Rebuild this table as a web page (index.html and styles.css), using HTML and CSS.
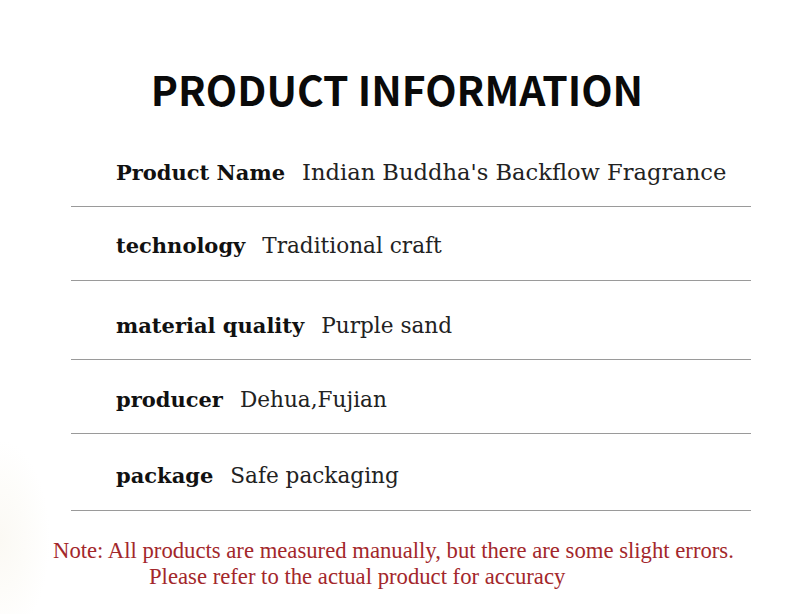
FILE: index.html
```html
<!DOCTYPE html>
<html>
<head>
<meta charset="utf-8">
<link rel="stylesheet" href="styles.css">
</head>
<body>
<div class="page">
  <h1 class="title">PRODUCT INFORMATION</h1>
  <div class="table">
    <div class="row row-1"><span class="label">Product Name</span><span class="value value-lg">Indian Buddha's Backflow Fragrance</span></div>
    <div class="row row-2"><span class="label">technology</span><span class="value">Traditional craft</span></div>
    <div class="row row-3"><span class="label">material quality</span><span class="value">Purple sand</span></div>
    <div class="row row-4"><span class="label">producer</span><span class="value">Dehua,Fujian</span></div>
    <div class="row row-5"><span class="label">package</span><span class="value">Safe packaging</span></div>
  </div>
  <div class="note">
    <p class="note-line">Note: All products are measured manually, but there are some slight errors.</p>
    <p class="note-line note-second">Please refer to the actual product for accuracy</p>
  </div>
</div>
</body>
</html>
```
FILE: styles.css
```css
html, body {
  margin: 0;
  padding: 0;
  background: #ffffff;
}
.page {
  width: 790px;
  height: 614px;
  overflow: hidden;
  background: radial-gradient(ellipse 50px 100px at 0px 540px, #fbf9f4 0%, #fdfcf9 50%, rgba(255,255,255,0) 100%), #ffffff;
}
.title {
  margin: 0;
  padding-top: 59px;
  height: 60px;
  line-height: 60px;
  text-align: center;
  font-family: "Noto Sans CJK SC", "Noto Sans", sans-serif;
  font-weight: 700;
  font-size: 40.8px;
  color: #0a0a0a;
  padding-left: 4px;
}
.table {
  margin-left: 71px;
  width: 680px;
  margin-top: 16px;
}
.row {
  display: flex;
  align-items: baseline;
  padding-left: 45px;
  border-bottom: 1px solid #9a9a9a;
  box-sizing: border-box;
  font-family: "DejaVu Serif", serif;
  color: #111;
}
.row-1 { height: 72px; padding-top: 24px; }
.row-2 { height: 74px; padding-top: 26px; }
.row-3 { height: 79px; padding-top: 32px; }
.row-4 { height: 74px; padding-top: 27px; }
.row-5 { height: 77px; padding-top: 29px; }
.label {
  font-weight: 700;
  font-size: 21px;
  margin-right: 17px;
}
.value {
  font-size: 21.6px;
  font-weight: 400;
  color: #222;
}
.value-lg {
  font-size: 22.6px;
}
.note {
  margin-top: 27px;
  font-family: "Liberation Serif", serif;
  color: #a3272b;
  font-size: 22.7px;
}
.note-line {
  margin: 0;
  line-height: 26px;
  padding-left: 53px;
  white-space: nowrap;
}
.note-second {
  padding-left: 149px;
}
```
